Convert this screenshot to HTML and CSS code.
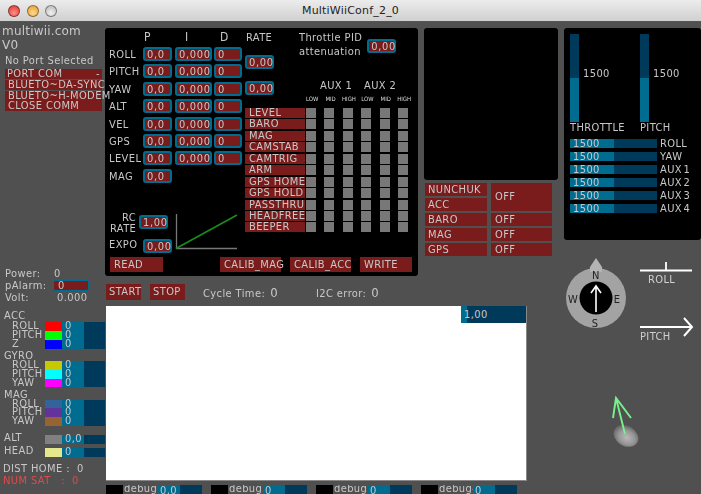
FILE: index.html
```html
<!DOCTYPE html>
<html>
<head>
<title>MultiWiiConf_2_0</title>
<meta charset="utf-8" />
<link rel="stylesheet" href="styles.css">
</head>
<body>
<div class="window">
	<div class="titlebar">
		<span class="light red"></span><span class="light amber"></span><span class="light grey"></span>
		<div class="title">MultiWiiConf_2_0</div>
	</div>
	<div class="app">
		<!-- left column -->
		<div class="left">
			<div class="brand">multiwii.com<br>V0</div>
			<div class="noport">No Port Selected</div>
			<div class="ports">
				<div class="port">PORT COM<i>-</i></div>
				<div class="port in">BLUETO~DA-SYNC</div>
				<div class="port in">BLUETO~H-MODEM</div>
				<div class="port in">CLOSE COMM</div>
			</div>
			<div class="power">
				<div class="pline"><span class="pname">Power:</span><span class="pval">0</span></div>
				<div class="pline"><span class="pname">pAlarm:</span><span class="palarm">0</span></div>
				<div class="pline"><span class="pname">Volt:</span><span class="pval wide">0.000</span></div>
			</div>
			<div class="shead first">ACC</div>
			<div class="srow"><span class="sname">ROLL</span><span class="swatch c-red"></span><span class="sbar">0</span></div>
			<div class="srow"><span class="sname">PITCH</span><span class="swatch c-green"></span><span class="sbar">0</span></div>
			<div class="srow"><span class="sname">Z</span><span class="swatch c-blue"></span><span class="sbar">0</span></div>
			<div class="shead">GYRO</div>
			<div class="srow"><span class="sname">ROLL</span><span class="swatch c-olive"></span><span class="sbar">0</span></div>
			<div class="srow"><span class="sname">PITCH</span><span class="swatch c-cyan"></span><span class="sbar">0</span></div>
			<div class="srow"><span class="sname">YAW</span><span class="swatch c-pink"></span><span class="sbar">0</span></div>
			<div class="shead">MAG</div>
			<div class="srow"><span class="sname">ROLL</span><span class="swatch c-steel"></span><span class="sbar">0</span></div>
			<div class="srow"><span class="sname">PITCH</span><span class="swatch c-purple"></span><span class="sbar">0</span></div>
			<div class="srow"><span class="sname">YAW</span><span class="swatch c-brown"></span><span class="sbar">0</span></div>
			<div class="srow big alt"><span class="sname top">ALT</span><span class="swatch c-grey"></span><span class="sbar">0,0</span></div>
			<div class="srow big head"><span class="sname top">HEAD</span><span class="swatch c-yellow"></span><span class="sbar">0</span></div>
			<div class="dist first">DIST HOME :&nbsp; 0</div>
			<div class="dist sat">NUM SAT &nbsp;&nbsp;: &nbsp;0</div>
		</div>

		<!-- centre column -->
		<div class="centre">
			<div class="toprow">
				<div class="panel pidpanel">
					<div class="pidtop">
						<div class="pidcol">
							<div class="pidhead"><span>P</span><span>I</span><span>D</span></div>
							<div class="pidrow"><label>ROLL</label><b class="f">0,0</b><b class="f">0,000</b><b class="f">0</b></div>
							<div class="pidrow"><label>PITCH</label><b class="f">0,0</b><b class="f">0,000</b><b class="f">0</b></div>
							<div class="pidrow"><label>YAW</label><b class="f">0,0</b><b class="f">0,000</b><b class="f">0</b></div>
							<div class="pidrow"><label>ALT</label><b class="f">0,0</b><b class="f">0,000</b><b class="f">0</b></div>
							<div class="pidrow"><label>VEL</label><b class="f">0,0</b><b class="f">0,000</b><b class="f">0</b></div>
							<div class="pidrow"><label>GPS</label><b class="f">0,0</b><b class="f">0,000</b><b class="f">0</b></div>
							<div class="pidrow"><label>LEVEL</label><b class="f">0,0</b><b class="f">0,000</b><b class="f">0</b></div>
							<div class="pidrow"><label>MAG</label><b class="f">0,0</b></div>
							<div class="rcbox">
								<div class="rcfields">
									<div class="pidrow rc"><label>RC<br>RATE</label><b class="f">1,00</b></div>
									<div class="pidrow expo"><label>EXPO</label><b class="f">0,00</b></div>
								</div>
								<svg class="curve" width="63" height="37" viewBox="0 0 63 37">
									<path d="M1.5 0V34.500H62" fill="none" stroke="#777" stroke-width="1.3"/>
									<path d="M1 34.500L62 1" fill="none" stroke="#1a8a1a" stroke-width="1.8"/>
								</svg>
							</div>
						</div>
						<div class="auxcol">
							<div class="upper">
								<div class="ratecol">
									<div class="ratehead">RATE</div>
									<b class="f">0,00</b>
									<b class="f second">0,00</b>
								</div>
								<div class="upright">
									<div class="throttle">
										<div class="thtext">Throttle PID<br>attenuation</div>
										<b class="f">0,00</b>
									</div>
									<div class="auxhead"><span>AUX 1</span><span>AUX 2</span></div>
									<div class="auxsub"><span>LOW</span><span>MID</span><span>HIGH</span><span>LOW</span><span>MID</span><span>HIGH</span></div>
								</div>
							</div>
							<div class="auxrow"><em>LEVEL</em><s></s><s></s><s></s><s></s><s></s><s></s></div>
							<div class="auxrow"><em>BARO</em><s></s><s></s><s></s><s></s><s></s><s></s></div>
							<div class="auxrow"><em>MAG</em><s></s><s></s><s></s><s></s><s></s><s></s></div>
							<div class="auxrow"><em>CAMSTAB</em><s></s><s></s><s></s><s></s><s></s><s></s></div>
							<div class="auxrow"><em>CAMTRIG</em><s></s><s></s><s></s><s></s><s></s><s></s></div>
							<div class="auxrow"><em>ARM</em><s></s><s></s><s></s><s></s><s></s><s></s></div>
							<div class="auxrow"><em>GPS HOME</em><s></s><s></s><s></s><s></s><s></s><s></s></div>
							<div class="auxrow"><em>GPS HOLD</em><s></s><s></s><s></s><s></s><s></s><s></s></div>
							<div class="auxrow"><em>PASSTHRU</em><s></s><s></s><s></s><s></s><s></s><s></s></div>
							<div class="auxrow"><em>HEADFREE</em><s></s><s></s><s></s><s></s><s></s><s></s></div>
							<div class="auxrow"><em>BEEPER</em><s></s><s></s><s></s><s></s><s></s><s></s></div>
						</div>
					</div>
					<div class="actions">
						<div class="btn read">READ</div>
						<div class="btn calib">CALIB_MAG</div>
						<div class="btn calib">CALIB_ACC</div>
						<div class="btn write">WRITE</div>
					</div>
				</div>
				<div class="midcol">
					<div class="panel blank"></div>
					<div class="status">
						<div class="st">NUNCHUK</div><div class="st off tall">OFF</div>
						<div class="st">ACC</div>
						<div class="st">BARO</div><div class="st off">OFF</div>
						<div class="st">MAG</div><div class="st off">OFF</div>
						<div class="st">GPS</div><div class="st off">OFF</div>
					</div>
				</div>
			</div>
			<div class="runrow">
				<div class="btn run">START</div>
				<div class="btn run">STOP</div>
				<div class="cycle">Cycle Time:<span>0</span></div>
				<div class="i2c">I2C error:<span>0</span></div>
			</div>
			<div class="plot">
				<div class="scale">1,00</div>
			</div>
			<div class="debugs">
				<div class="debug"><s></s><span>debug1</span><b>0,0</b></div>
				<div class="debug"><s></s><span>debug2</span><b>0</b></div>
				<div class="debug"><s></s><span>debug3</span><b>0</b></div>
				<div class="debug"><s></s><span>debug4</span><b>0</b></div>
			</div>
		</div>

		<!-- right column -->
		<div class="right">
			<div class="panel rc-panel">
				<div class="sticks">
					<div class="stick"><div class="vbar"></div><span>1500</span></div>
					<div class="stick"><div class="vbar"></div><span>1500</span></div>
				</div>
				<div class="sticknames"><span>THROTTLE</span><span>PITCH</span></div>
				<div class="hrow"><div class="hbar">1500</div><span>ROLL</span></div>
				<div class="hrow"><div class="hbar">1500</div><span>YAW</span></div>
				<div class="hrow"><div class="hbar">1500</div><span>AUX 1</span></div>
				<div class="hrow"><div class="hbar">1500</div><span>AUX 2</span></div>
				<div class="hrow"><div class="hbar">1500</div><span>AUX 3</span></div>
				<div class="hrow"><div class="hbar">1500</div><span>AUX 4</span></div>
			</div>
			<svg class="gauges" width="137" height="232" viewBox="564 240 137 232">
				<defs>
					<radialGradient id="ball" cx="0.55" cy="0.55" r="0.55">
						<stop offset="0" stop-color="#b8b8b8"/>
						<stop offset="0.6" stop-color="#969696"/>
						<stop offset="1" stop-color="#686868"/>
					</radialGradient>
				</defs>
				<circle cx="596" cy="298" r="30" fill="#a3a3a3"/>
				<path d="M596 258L602 267V272H590V267Z" fill="#b4b4b4"/>
				<circle cx="596" cy="298" r="16.500" fill="#000"/>
				<path d="M596 312V286M591 293L596 286L601 293" fill="none" stroke="#fff" stroke-width="1.600"/>
				<text class="cmp" x="596" y="279" text-anchor="middle">N</text>
				<text class="cmp" x="595" y="327" text-anchor="middle">S</text>
				<text class="cmp" x="617" y="303" text-anchor="middle">E</text>
				<text class="cmp" x="573" y="303" text-anchor="middle">W</text>
				<path d="M640 270.500H692M666 262V270" fill="none" stroke="#fff" stroke-width="1.800"/>
				<text class="att" x="648" y="283">ROLL</text>
				<path d="M640 327H692M684 318L692 327L684 336" fill="none" stroke="#fff" stroke-width="2"/>
				<text class="att" x="640" y="340">PITCH</text>
				<ellipse cx="626" cy="436" rx="13" ry="10" transform="rotate(30 626 436)" fill="url(#ball)"/>
				<path d="M625 434L616 398M613 418L616 398L631 418" fill="none" stroke="#78f08c" stroke-width="1.900"/>
			</svg>
		</div>
	</div>
</div>
</body>
</html>
```

FILE: styles.css
```css
html{overflow:hidden;}
body{margin:0px; padding:0px; background:#505050; font-family:"DejaVu Sans",sans-serif; font-size:11px; color:#c8c8c8;}
b,em,label,s{font-weight:normal; font-style:normal; text-decoration:none;}

.window{width:701px; height:494px; overflow:hidden; background:#505050;}
.titlebar{height:21px; position:relative; display:flex; align-items:center; padding-left:8px; gap:6.600px; background:linear-gradient(#ececec,#d0d0d0); border-bottom:1px solid #555;}
.light{width:10px; height:10px; border-radius:50%; border:.5px solid rgba(0,0,0,.4);}
.light.red{background:radial-gradient(circle at 50% 70%,#ff8f86,#d8322c);}
.light.amber{background:radial-gradient(circle at 50% 70%,#ffd98c,#e09a2c);}
.light.grey{background:radial-gradient(circle at 50% 70%,#f2f2f2,#b4b4b4);}
.title{position:absolute; left:0; right:0; top:3px; text-align:center; font-size:11px; line-height:15px; color:#222; letter-spacing:.2px;}

.app{display:flex; height:472px; filter:blur(.35px); font-stretch:condensed; letter-spacing:.4px;}
.left{width:105px; flex:none;}
.centre{width:459px; flex:none;}
.right{width:137px; flex:none;}

/* left column */
.brand{font-size:12px; line-height:14px; padding:2px 0 0 2px; font-stretch:normal; letter-spacing:.2px;}
.noport{line-height:12px; margin-top:3px; padding-left:5px;}
.ports{margin-top:2px;}
.port{height:10px; line-height:10px; margin:0 3px 0.8px 5px; padding-left:2px; background:#7a1c1c; white-space:nowrap; position:relative;}
.port.in{padding-left:3px;}
.port i{position:absolute; right:2px; top:0; font-style:normal;}
.power{margin-top:157px;}
.pline{height:12px; line-height:12px; display:flex; padding-left:5px;}
.pname{width:48px; flex:none;}
.pval{padding-left:1px;}
.pval.wide{padding-left:4px;}
.palarm{width:36px; height:11px; box-sizing:border-box; border:1px solid #006c90; border-radius:2px; background:#7a1c1c; line-height:9px; padding-left:4px;}
.shead{height:11px; line-height:12px; padding-left:4px; margin-top:1.200px;}
.shead.first{margin-top:6px; height:12px;}
.srow{display:flex; height:8.800px; line-height:8.800px;}
.sname{width:33px; margin-left:12px; flex:none; white-space:nowrap;}
.swatch{width:17px; flex:none;}
.sbar{width:43px; box-sizing:border-box; padding-left:3px; flex:none; background:linear-gradient(90deg,#006c90 22px,#003a5a 22px);}
.srow.big{height:9px; margin-left:-8px;}
.srow.big .sname{margin-left:12px; width:41px;}
.srow.alt{margin-top:9px;}
.srow.head{margin-top:4px;}
.srow.big .sname.top{line-height:6px;}
.c-red{background:#ff0000;} .c-green{background:#00ff00;} .c-blue{background:#0000ff;}
.c-olive{background:#c8c800;} .c-cyan{background:#00ffff;} .c-pink{background:#ff00ff;}
.c-steel{background:#32649b;} .c-purple{background:#64329b;} .c-brown{background:#966432;}
.c-grey{background:#808080;} .c-yellow{background:#e6e68c;}
.dist{height:12px; line-height:12px; padding-left:3px;}
.dist.first{margin-top:6px;}
.sat{color:#e04a4a;}

/* panels */
.panel{background:#000; border-radius:3px;}
.toprow{display:flex; padding-top:6px; gap:6px;}
.pidpanel{width:313px; height:248px; flex:none;}
.pidtop{display:flex; height:229px;}
.pidcol{width:140px; flex:none;}
.pidhead{height:19px; padding-left:39px; display:grid; grid-template-columns:41px 35px 20px; font-size:12px; line-height:19px;}
.pidrow{display:flex; height:15px; margin-bottom:2.400px; line-height:15px; gap:3px;}
.pidrow label{width:31px; padding-left:4px; flex:none; white-space:nowrap;}
.f{display:block; width:29px; height:14px; box-sizing:border-box; border:2px solid #006c90; border-radius:3px; background:#7a1c1c; line-height:11px; padding-left:2px; white-space:nowrap; letter-spacing:.7px;}
.pidrow .f:nth-of-type(2){width:37px;}
.pidrow .f:nth-of-type(3){width:28px; margin-left:-1px;}
.rcbox{display:flex; margin-top:30px;}
.rcfields{width:71px;}
.rcfields .pidrow{width:71px;}
.pidrow.rc{height:24px; margin-bottom:0;}
.pidrow.rc label{line-height:11px; text-align:right; width:26px; padding:0 0 0 5px; margin-top:-2px;}
.pidrow.rc .f{margin-top:1px;}
.pidrow.expo .f{margin-top:1px;}
.pidrow.expo label{line-height:14px;}
.curve{display:block; margin:0 0 0 -1px;}

.auxcol{flex:1;}
.upper{display:flex; height:80px;}
.ratecol{width:29px; flex:none;}
.ratehead{height:27px; padding-left:1px; line-height:19px;}
.ratecol .f.second{margin-top:12px;}
.upright{flex:1; min-width:0;}
.throttle{display:flex; padding-top:3px; height:52px; box-sizing:border-box; padding-left:25px; gap:5px;}
.thtext{line-height:14px; white-space:nowrap;}
.throttle .f{margin-top:8px;}
.auxhead{display:flex; height:14px; line-height:12px; padding-left:46px; gap:17px;}
.auxhead span{width:27px; white-space:nowrap;}
.auxsub{display:grid; grid-template-columns:repeat(6,18.400px); height:9px; padding-left:29px; font-size:6px; line-height:9px; text-align:center; color:#ddd; letter-spacing:0;}
.auxrow{display:flex; height:10px; margin-bottom:1.450px;}
.auxrow em{width:60px; margin-right:1px; padding-left:4px; box-sizing:border-box; background:#7a1c1c; line-height:10px; white-space:nowrap;}
.auxrow s{display:block; width:10px; height:10px; background:#787878; margin-right:8.400px;}

.actions{display:flex; padding-left:5px; height:15px;}
.btn{height:15px; line-height:15px; background:#7a1c1c; padding-left:4px; box-sizing:border-box; white-space:nowrap;}
.btn.read{width:53px; margin-right:57px;}
.btn.calib{width:61px; margin-right:9px;}
.btn.write{width:52px;}

.midcol{width:134px; flex:none;}
.blank{height:152px;}
.status{display:grid; grid-template-columns:62px 61px; column-gap:4px; row-gap:2px; grid-auto-rows:13px; padding:3px 0 0 1px;}
.st{background:#7a1c1c; line-height:13px; padding-left:3px;}
.st.off{padding-left:4px;}
.st.tall{grid-row:span 2; line-height:28px;}

.runrow{display:flex; padding:8px 0 0 1px; height:16px;}
.btn.run{width:35px; height:16px; line-height:16px; padding-left:3px; margin-right:9px;}
.cycle,.i2c{line-height:18px; white-space:nowrap;}
.cycle{margin-left:9px; width:113px;}
.cycle span{margin-left:5px; font-size:13px;}
.i2c span{margin-left:5px; font-size:13px;}

.plot{width:420px; height:174px; margin:6px 0 0 1px; background:#fff; position:relative; border:solid #888; border-width:0 1px 1px 0;}
.scale{position:absolute; right:0; top:0; width:65px; height:17px; box-sizing:border-box; padding-left:3px; line-height:17px; background:linear-gradient(90deg,#006c90 6px,#003a5a 6px);}
.debugs{display:flex; gap:9px; margin:4px 0 0 1px;}
.debug{display:flex; width:96px; height:9px; line-height:7px; flex:none;}
.debug s{width:17px; background:#000; flex:none;}
.debug span{width:35px; padding-left:1px; box-sizing:border-box; overflow:hidden; flex:none;}
.debug b{width:44px; flex:none; padding-left:2px; box-sizing:border-box; line-height:11px; background:linear-gradient(90deg,#006c90 22px,#003a5a 22px);}

/* right column */
.right{padding-top:6px;}
.rc-panel{height:212px; box-sizing:border-box; padding:6px 0 0 6px;}
.sticks{display:flex; height:88px;}
.stick{width:70px; display:flex; flex:none;}
.vbar{width:9px; height:88px; background:linear-gradient(#003a5a 44px,#006c90 44px);}
.stick span{padding:34px 0 0 4px; line-height:12px;}
.sticknames{display:flex; height:17px; line-height:11px;}
.sticknames span{width:70px; flex:none;}
.hrow{display:flex; height:9px; margin-bottom:4.100px; line-height:9px;}
.hbar{width:87px; padding-left:3px; box-sizing:border-box; background:linear-gradient(90deg,#006c90 44px,#003a5a 44px);}
.hrow span{margin-left:3px; word-spacing:-2px;}

.gauges{display:block;}
.cmp{font-size:11px; fill:#222;}
.att{font-size:11px; fill:#d0d0d0;}
```
